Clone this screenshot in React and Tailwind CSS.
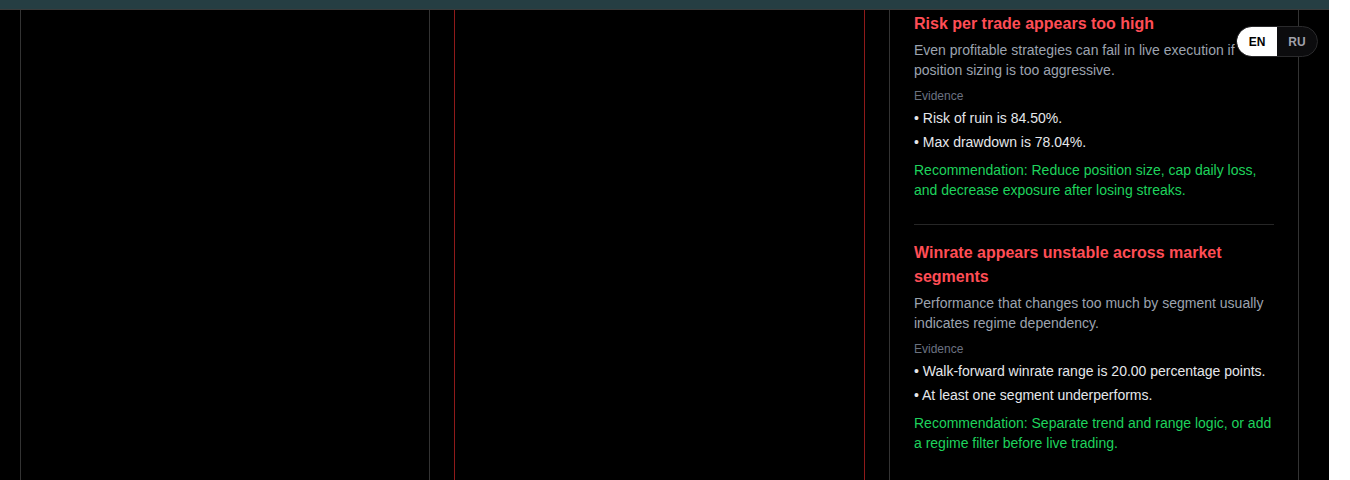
import React from 'react';

const issues = [
    {
        title: 'Risk per trade appears too high',
        text: 'Even profitable strategies can fail in live execution if position sizing is too aggressive.',
        evidence: ['Risk of ruin is 84.50%.', 'Max drawdown is 78.04%.'],
        rec: 'Recommendation: Reduce position size, cap daily loss, and decrease exposure after losing streaks.'
    },
    {
        title: 'Winrate appears unstable across market segments',
        text: 'Performance that changes too much by segment usually indicates regime dependency.',
        evidence: ['Walk-forward winrate range is 20.00 percentage points.', 'At least one segment underperforms.'],
        rec: 'Recommendation: Separate trend and range logic, or add a regime filter before live trading.'
    }
];

const Issue = ({ item, last }) => (
    <div className={last ? 'pt-4' : 'pb-6 border-b border-[#262626]'}>
        <h3 className="text-base leading-6 font-bold text-[#ff4d55]">{item.title}</h3>
        <p className="mt-1 text-sm leading-5 text-[#9ca3af]">{item.text}</p>
        <div className="mt-2 text-xs leading-4 text-[#6b7280]">Evidence</div>
        <ul className="mt-1 space-y-1">
            {item.evidence.map(e => (
                <li key={e} className="text-sm leading-5 text-[#e5e7eb]">• {e}</li>
            ))}
        </ul>
        <p className="mt-2 text-sm leading-5 text-[#1ed35c]">{item.rec}</p>
    </div>
);

const App = () => {
    return (
        <div className="flex h-[480px] w-[1350px] overflow-hidden bg-white" style={{ fontFamily: '"Liberation Sans", Arial, sans-serif' }}>
            <div className="flex w-[1329px] flex-col bg-black">
                <div className="h-[10px] shrink-0 border-b border-[#3a3a3a] bg-[#263e43]" />
                <div className="flex flex-1 gap-6 pl-5">
                    <div className="w-[410px] border-x border-[#333333]" />
                    <div className="w-[411px] border-x border-[#8f1a1a]" />
                    <div className="w-[410px] border-x border-[#333333] px-6 pt-[2px]">
                        {issues.map((it, i) => (
                            <Issue key={it.title} item={it} last={i === issues.length - 1} />
                        ))}
                    </div>
                </div>
            </div>
            <div className="w-[21px] bg-white" />

            <div className="absolute left-[1236px] top-[26px] flex h-[31px] overflow-hidden rounded-full border border-[#2a2a2c] bg-[#0c0c0e]">
                <button className="w-[40px] rounded-l-full bg-white text-xs font-bold text-black">EN</button>
                <button className="w-[40px] text-xs font-bold text-[#a1a1aa]">RU</button>
            </div>
        </div>
    );
};

export default App;
